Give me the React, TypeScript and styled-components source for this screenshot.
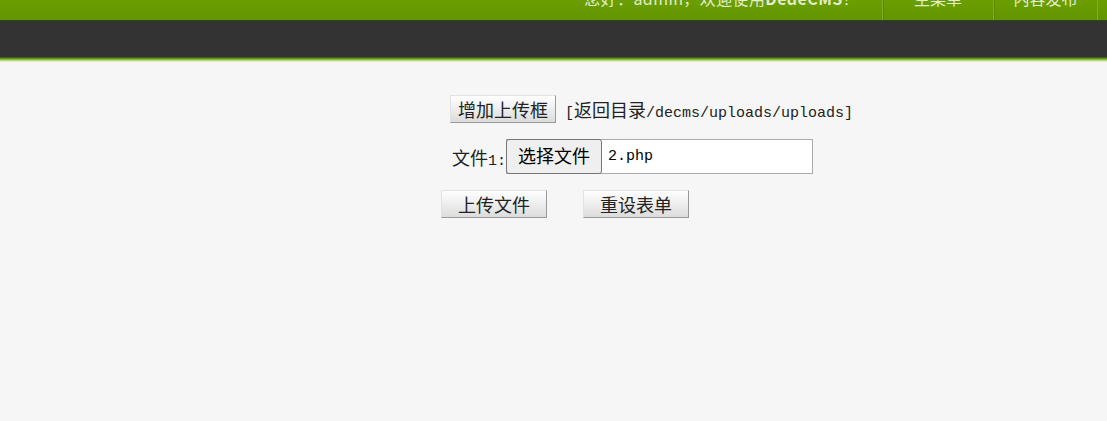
import styled, { createGlobalStyle } from 'styled-components';

const GlobalStyle = createGlobalStyle`
  body {
    margin: 0;
    background: #f6f6f6;
    font-family: "Noto Sans CJK SC", sans-serif;
  }
`;

const Page = styled.div`
  min-height: 421px;
  background: #f6f6f6;
`;

const TopBar = styled.div`
  display: flex;
  justify-content: flex-end;
  height: 20px;
  padding-right: 9px;
  overflow: hidden;
  background: linear-gradient(#6b9f00, #629400);
  border-bottom: 1px solid #2f4512;
`;

const Welcome = styled.div`
  margin-top: -10px;
  padding-right: 23px;
  font-size: 16px;
  line-height: 16px;
  letter-spacing: 0.4px;
  color: #e2ecd0;
  white-space: nowrap;

  b {
    font-weight: bold;
  }
`;

const NavItem = styled.div<{ $w: number }>`
  width: ${(p) => p.$w}px;
  margin-top: -10px;
  border-left: 1px solid #7fae2a;
  box-shadow: inset 1px 0 0 #5a8800;
  text-align: center;
  font-size: 16px;
  line-height: 16px;
  color: #e2ecd0;
  white-space: nowrap;

  &:last-child {
    border-right: 1px solid #7fae2a;
  }
`;

const DarkBar = styled.div`
  height: 36px;
  background: #333333;
`;

const GreenEdge = styled.div`
  height: 5px;
  background: linear-gradient(#35501a, #5f8f1c 30%, #96c445 55%, #cfe3a8 80%, #eef3e4);
`;

const Form = styled.div`
  display: flex;
  flex-direction: column;
  gap: 16px;
  margin-left: 441px;
  padding-top: 33px;
  color: #222;
  font-size: 18px;
`;

const Row = styled.div<{ $indent?: number; $gap?: number }>`
  display: flex;
  align-items: center;
  gap: ${(p) => p.$gap ?? 0}px;
  padding-left: ${(p) => p.$indent ?? 0}px;
`;

const Button = styled.button`
  width: 106px;
  height: 28px;
  padding: 0;
  font-family: "Noto Sans CJK SC", sans-serif;
  font-size: 18px;
  line-height: 24px;
  color: #222;
  background: linear-gradient(#ffffff, #dcdcdc);
  border: 1px solid;
  border-color: #e2e2e2 #999 #999 #e2e2e2;
`;

const Mono = styled.span`
  font-family: "Liberation Mono", "Noto Sans CJK SC", monospace;
  font-size: 15px;
`;

const Label = styled.span`
  white-space: nowrap;
`;

const BackLink = styled.span`
  margin-left: 9px;
  white-space: nowrap;
`;

const FileBox = styled.div`
  display: flex;
  align-items: center;
  width: 305px;
  height: 33px;
  background: #fff;
  border: 1px solid #aaa;
`;

const ChooseButton = styled.div`
  box-sizing: border-box;
  width: 96px;
  height: 35px;
  margin: -1px 0 -1px -1px;
  border: 1px solid #767676;
  border-radius: 3px;
  background: #efefef;
  text-align: center;
  font-size: 18px;
  line-height: 31px;
  color: #000;
`;

const FileName = styled(Mono)`
  margin-left: 6px;
  color: #000;
`;

const App = () => {
  return (
    <Page>
      <GlobalStyle />
      <TopBar>
        <Welcome>
          您好：admin，欢迎使用<b>DedeCMS</b>！
        </Welcome>
        <NavItem $w={110}>主菜单</NavItem>
        <NavItem $w={103}>内容发布</NavItem>
      </TopBar>
      <DarkBar />
      <GreenEdge />
      <Form>
        <Row $indent={9}>
          <Button>增加上传框</Button>
          <BackLink>
            <Mono>[</Mono>返回目录<Mono>/decms/uploads/uploads]</Mono>
          </BackLink>
        </Row>
        <Row $indent={11}>
          <Label>
            文件<Mono>1:</Mono>
          </Label>
          <FileBox>
            <ChooseButton>选择文件</ChooseButton>
            <FileName>2.php</FileName>
          </FileBox>
        </Row>
        <Row $gap={36}>
          <Button>上传文件</Button>
          <Button>重设表单</Button>
        </Row>
      </Form>
    </Page>
  );
};

export default App;
